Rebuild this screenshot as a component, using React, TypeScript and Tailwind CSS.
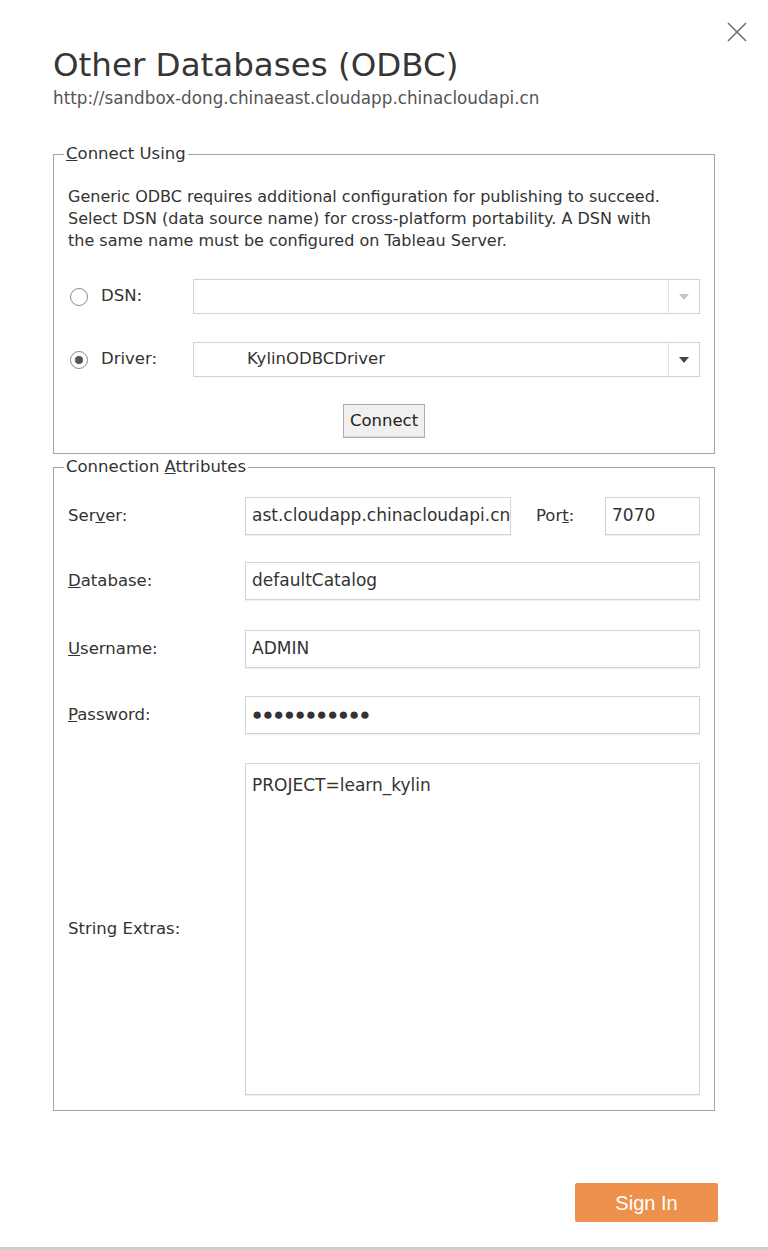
import React from 'react';

const font = "font-['DejaVu_Sans',Verdana,sans-serif]";

function Radio({ checked }: { checked?: boolean }) {
  return (
    <span className="flex h-[18px] w-[18px] items-center justify-center rounded-full border border-[#8a8a8a] bg-white">
      {checked && <span className="h-[8px] w-[8px] rounded-full bg-[#555]" />}
    </span>
  );
}

function Select({ value, disabled }: { value?: string; disabled?: boolean }) {
  return (
    <div className="flex h-[35px] flex-1 items-stretch border border-[#d2d2d2] bg-white">
      <div className="flex flex-1 items-center pl-[53px] text-[16.5px] text-[#333]">{value}</div>
      <div className="flex w-[31px] items-center justify-center border-l border-[#e4e4e4]">
        <svg width="10" height="6" viewBox="0 0 10 6">
          <path d="M0 0h10L5 6z" fill={disabled ? '#c4c4c4' : '#444'} />
        </svg>
      </div>
    </div>
  );
}

function Field({ label, children, className = '' }: { label: React.ReactNode; children: React.ReactNode; className?: string }) {
  return (
    <div className={`flex items-center ${className}`}>
      <div className="w-[177px] shrink-0 text-[16.5px]">{label}</div>
      {children}
    </div>
  );
}

function TextBox({ children, className = '' }: { children?: React.ReactNode; className?: string }) {
  return (
    <div className={`flex h-[38px] items-center border border-[#d4d4d4] bg-white px-[6px] text-[17px] text-[#333] shadow-[0_1px_1px_rgba(0,0,0,0.06)] ${className}`}>
      {children}
    </div>
  );
}

export default function App() {
  return (
    <div className={`relative flex h-[1250px] w-[768px] flex-col bg-white text-[#333] ${font}`}>
      {/* window close */}
      <button className="absolute left-[727px] top-[22px] h-[20px] w-[20px]">
        <svg width="20" height="20" viewBox="0 0 20 20">
          <path d="M1 1L19 19M19 1L1 19" stroke="#707070" strokeWidth="1.6" />
        </svg>
      </button>

      <div className="flex flex-1 flex-col px-[53px] pt-[43px]">
        <h1 className="text-[32.5px] leading-[44px] text-[#363636]">Other Databases (ODBC)</h1>
        <p className="mt-[2px] text-[16.8px] leading-[18px] text-[#555]">
          http://sandbox-dong.chinaeast.cloudapp.chinacloudapi.cn
        </p>

        {/* Connect Using */}
        <fieldset className="mt-[37px] border border-[#a5a5a5] px-[14px] pb-[15px]">
          <legend className="-ml-[4px] px-[2px] text-[16.5px] leading-[20px]">
            <span className="underline">C</span>onnect Using
          </legend>
          <p className="mt-[22px] text-[16px] leading-[22px]">
            Generic ODBC requires additional configuration for publishing to succeed.
            <br />
            Select DSN (data source name) for cross-platform portability. A DSN with
            <br />
            the same name must be configured on Tableau Server.
          </p>

          <div className="mt-[27px] flex items-center">
            <div className="flex w-[125px] items-center gap-[13px] pl-[2px] text-[16.5px]">
              <Radio />
              <span>DSN:</span>
            </div>
            <Select disabled />
          </div>
          <div className="mt-[28px] flex items-center">
            <div className="flex w-[125px] items-center gap-[13px] pl-[2px] text-[16.5px]">
              <Radio checked />
              <span>Driver:</span>
            </div>
            <Select value="KylinODBCDriver" />
          </div>

          <div className="mt-[27px] flex justify-center">
            <button className="h-[34px] w-[82px] border border-[#adadad] bg-[#f0f0f0] text-[16.5px] text-[#222] shadow-[inset_0_-1px_0_#d8d8d8]">
              Connect
            </button>
          </div>
        </fieldset>

        {/* Connection Attributes */}
        <fieldset className="mt-[3px] border border-[#a5a5a5] px-[14px] pb-[15px]">
          <legend className="-ml-[4px] px-[2px] text-[16.5px] leading-[20px]">
            Connection <span className="underline">A</span>ttributes
          </legend>

          <Field label={<>Ser<span className="underline">v</span>er:</>} className="mt-[20px]">
            <TextBox className="w-[266px] overflow-hidden whitespace-nowrap text-[16.8px]">
              ast.cloudapp.chinacloudapi.cn
            </TextBox>
            <span className="ml-[25px] w-[69px] text-[16.5px]">
              Por<span className="underline">t</span>:
            </span>
            <TextBox className="flex-1">7070</TextBox>
          </Field>

          <Field label={<><span className="underline">D</span>atabase:</>} className="mt-[27px]">
            <TextBox className="flex-1">defaultCatalog</TextBox>
          </Field>

          <Field label={<><span className="underline">U</span>sername:</>} className="mt-[30px]">
            <TextBox className="flex-1">ADMIN</TextBox>
          </Field>

          <Field label={<><span className="underline">P</span>assword:</>} className="mt-[28px]">
            <TextBox className="flex-1 font-['Liberation_Sans',Arial,sans-serif] text-[12.5px] tracking-[0.5px]">
              ●●●●●●●●●●●
            </TextBox>
          </Field>

          <Field label="String Extras:" className="mt-[29px]">
            <div className="h-[332px] flex-1 border border-[#d4d4d4] bg-white px-[6px] py-[10px] text-[17px] leading-[22px] text-[#333] shadow-[0_1px_1px_rgba(0,0,0,0.06)]">
              PROJECT=learn_kylin
            </div>
          </Field>
        </fieldset>

        <div className="mt-auto mb-[25px] -mr-[3px] flex justify-end">
          <button className="h-[39px] w-[143px] rounded-[2px] bg-[#ee914d] font-['Liberation_Sans',Arial,sans-serif] text-[20px] text-white">
            Sign In
          </button>
        </div>
      </div>

      <div className="h-[3px] bg-[#cfcfcf]" />
    </div>
  );
}
